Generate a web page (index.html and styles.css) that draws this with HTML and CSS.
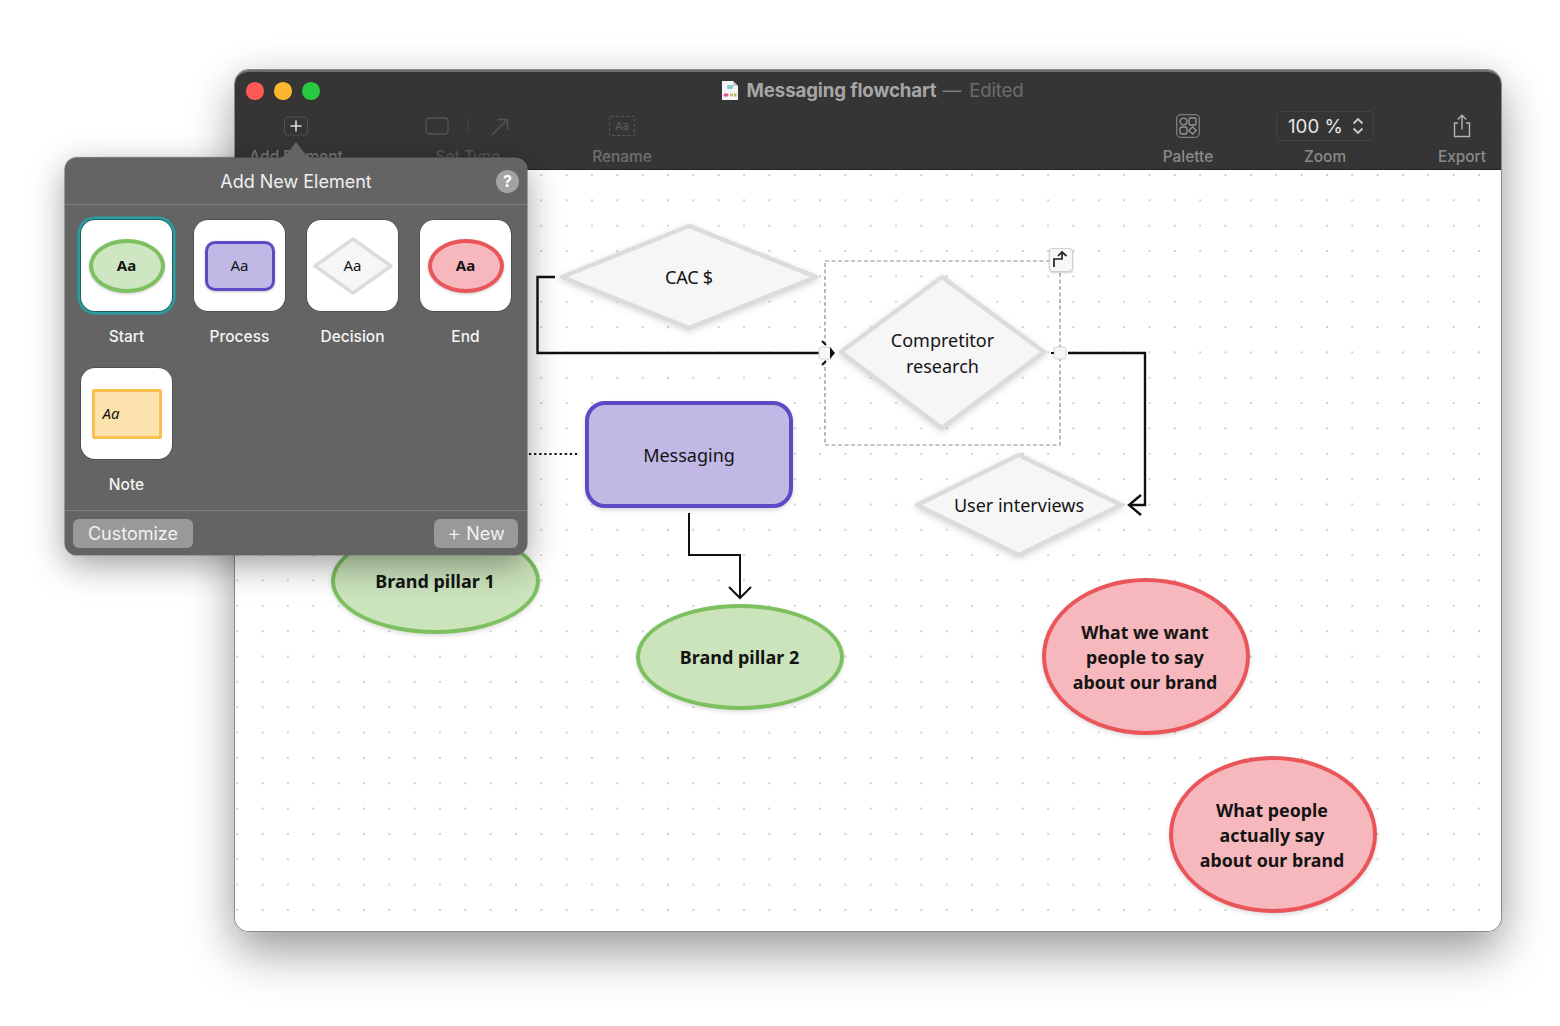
FILE: index.html
```html
<!DOCTYPE html>
<html lang="en">
<head>
<meta charset="utf-8">
<title>Messaging flowchart</title>
<link rel="stylesheet" href="styles.css">
</head>
<body>
<div class="stage">
  <main class="window">
    <header class="chrome">
      <div class="titlebar">
        <div class="lights"><span class="light light-red"></span><span class="light light-amber"></span><span class="light light-green"></span></div>
        <div class="title">
          <svg class="doc" viewBox="0 0 18 21"><path d="M1 1h11l5 5v14H1z" fill="#f4f4f4"/><path d="M12 1l5 5h-5z" fill="#c9c9c9"/><rect x="6" y="5" width="6" height="4" rx="1" fill="#7fd0d0"/><ellipse cx="5" cy="15" rx="2.6" ry="1.8" fill="#e0559a"/><rect x="9" y="13.5" width="3" height="3" fill="#e9b949"/><rect x="13" y="13.5" width="2.5" height="3" fill="#8fc77a"/></svg>
          <span class="doc-name">Messaging flowchart</span><span class="dash">—</span><span class="edited">Edited</span>
        </div>
      </div>
      <div class="toolbar">
        <div class="tool tool-add">
          <svg class="tool-icon" width="24" height="20" viewBox="0 0 24 20"><rect x=".5" y="1" width="23" height="18" rx="3" fill="none" stroke="#515151"/><path d="M12 4.500v11M6.500 10h11" stroke="#dcdcdc" stroke-width="1.6"/></svg>
          <span class="tool-label">Add Element</span>
        </div>
        <div class="tool tool-type">
          <svg class="tool-icon" width="86" height="20" viewBox="0 0 86 20"><rect x="1" y="2" width="22" height="16" rx="3" fill="none" stroke="#555" stroke-width="1.3"/><path d="M43 2v16" stroke="#484848"/><path d="M67 19L82 4M72 3.500h10.500V14" fill="none" stroke="#555" stroke-width="1.4"/></svg>
          <span class="tool-label off">Set Type</span>
        </div>
        <div class="tool tool-rename">
          <span class="rename-box">Aa</span>
          <span class="tool-label dim">Rename</span>
        </div>
        <div class="tools-right">
          <div class="tool tool-narrow">
            <svg class="tool-icon" width="24" height="24" viewBox="0 0 24 24" fill="none" stroke="#969696" stroke-width="1.3"><rect x=".7" y=".7" width="22.6" height="22.6" rx="4" stroke="#7c7c7c"/><circle cx="7.500" cy="7.500" r="3.400"/><rect x="13" y="4" width="7" height="7" rx="1"/><rect x="4" y="13" width="7" height="7" rx="2"/><path d="M16.500 12.800l3.700 3.700-3.700 3.700-3.700-3.700z"/></svg>
            <span class="tool-label">Palette</span>
          </div>
          <div class="tool tool-zoom">
            <div class="zoom-box"><span class="zoom-value">100 %</span><svg width="12" height="18" viewBox="0 0 12 18" fill="none" stroke="#c9c9c9" stroke-width="1.9"><path d="M1.500 6.500L6 2l4.500 4.500M1.500 11.500L6 16l4.500-4.500"/></svg></div>
            <span class="tool-label">Zoom</span>
          </div>
          <div class="tool tool-narrow">
            <svg class="tool-icon" width="20" height="24" viewBox="0 0 20 24" fill="none" stroke="#b4b4b4" stroke-width="1.4"><path d="M6 9H2.500v13.500h15V9H14M10 15.500V1.500M5.800 5.500L10 1.300l4.200 4.200"/></svg>
            <span class="tool-label">Export</span>
          </div>
        </div>
      </div>
    </header>

    <section class="canvas">
      <svg class="edges" viewBox="235 170 1266 761" width="1266" height="761">
        <g class="diamond">
          <polygon points="689,226 816,277 689,328 562,277"/>
          <polygon points="942,277 1044,352 942,428 841,352"/>
          <polygon points="1019,455 1121,505 1019,555 917,505"/>
        </g>
        <g class="line">
          <path d="M555 277H537.500V353H820"/>
          <path d="M1068 353H1145V505H1130"/>
          <path d="M1141 495L1129 505L1141 515"/>
          <path class="thin" d="M689 513V555H740V597"/>
          <path class="thin" d="M729 587L740 598L751 587"/>
        </g>
        <path class="dots" d="M529 454H578"/>
        <rect class="selection" x="825" y="261" width="235" height="184"/>
        <rect class="handle" x="819" y="347" width="12" height="12" rx="2"/>
        <rect class="handle" x="1054" y="347" width="12" height="12" rx="2"/>
        <path class="arrow-bits" d="M830 347L835 353L830 359z"/>
        <path class="ticks" d="M822 341L826 345M822 365L826 361M1051 353h3"/>
      </svg>

      <div class="node label n-cac">CAC $</div>
      <div class="node label n-comp">Compretitor<br>research</div>
      <div class="node label n-user">User interviews</div>
      <div class="node process n-msg">Messaging</div>
      <div class="node ellipse ellipse-green n-b1">Brand pillar 1</div>
      <div class="node ellipse ellipse-green n-b2">Brand pillar 2</div>
      <div class="node ellipse ellipse-pink n-want">What we want<br>people to say<br>about our brand</div>
      <div class="node ellipse ellipse-pink n-say">What people<br>actually say<br>about our brand</div>

      <button class="route-btn"><svg width="22" height="22" viewBox="0 0 22 22" fill="none" stroke="#222" stroke-width="1.700"><path d="M4 18v-8h8V3M8 7l4-4 4.500 4"/></svg></button>
    </section>
  </main>

  <aside class="popover">
    <svg class="pop-arrow" width="40" height="20" viewBox="0 0 40 20"><path d="M0 20C8 19 12 14 20 3C28 14 32 19 40 20z" fill="#646464"/></svg>
    <div class="pop-head">
      <span class="pop-title">Add New Element</span>
      <span class="help">?</span>
    </div>
    <div class="pop-grid">
      <div class="cell">
        <div class="tile selected"><span class="shape s-ellipse s-green">Aa</span></div>
        <span class="cell-label">Start</span>
      </div>
      <div class="cell">
        <div class="tile"><span class="shape s-process">Aa</span></div>
        <span class="cell-label">Process</span>
      </div>
      <div class="cell">
        <div class="tile">
          <svg class="s-diamond" width="84" height="62" viewBox="0 0 84 62"><polygon points="42,4 80,31 42,58 4,31"/></svg>
          <span class="s-diamond-text">Aa</span>
        </div>
        <span class="cell-label">Decision</span>
      </div>
      <div class="cell">
        <div class="tile"><span class="shape s-ellipse s-pink">Aa</span></div>
        <span class="cell-label">End</span>
      </div>
      <div class="cell">
        <div class="tile"><span class="shape s-note">Aa</span></div>
        <span class="cell-label">Note</span>
      </div>
    </div>
    <div class="pop-foot">
      <button class="pop-btn btn-custom">Customize</button>
      <button class="pop-btn btn-new"><span class="btn-plus">+</span> New</button>
    </div>
  </aside>
</div>
</body>
</html>
```

FILE: styles.css
```css
* { box-sizing: border-box; }
html, body { margin: 0; padding: 0; background: #fff; }
body { width: 1560px; height: 1026px; overflow: hidden; font-family: "Inter", "Liberation Sans", sans-serif; }

.stage { position: relative; width: 1560px; height: 1026px; padding: 70px 59px 95px 235px; }

.window {
  display: flex; flex-direction: column;
  width: 1266px; height: 861px;
  border-radius: 14px;
  background: #fff;
  box-shadow: 0 0 0 1px #8a8a8a, 0 24px 48px rgba(0,0,0,.32), 0 4px 40px rgba(0,0,0,.12);
}

.chrome {
  height: 100px; flex: none;
  background: #353535;
  border-radius: 14px 14px 0 0;
  border-top: 2px solid #6c6c6c;
  border-bottom: 1px solid #232323;
}
.titlebar { position: relative; height: 37px; display: flex; align-items: center; justify-content: center; padding-left: 8px; }
.lights { position: absolute; left: 11px; top: 10px; display: flex; gap: 10.500px; }
.light { width: 17.500px; height: 17.500px; border-radius: 50%; }
.light-red { background: #fd5a55; }
.light-amber { background: #fdb62f; }
.light-green { background: #28c840; }
.title { display: flex; align-items: center; font-size: 18.700px; line-height: 24px; }
.doc { width: 18px; height: 21px; margin-right: 8px; }
.doc-name { font-weight: 700; color: #a6a6a6; letter-spacing: -.15px; }
.dash { color: #7c7c7c; margin: 0 8px 0 6px; }
.edited { color: #6c6c6c; letter-spacing: -.2px; }

.toolbar { display: flex; height: 61px; padding: 5px 9px 0 15px; }
.tool { display: flex; flex-direction: column; align-items: center; height: 54px; }
.tool-icon { display: block; height: 24px; }
.tool-add { width: 92px; }
.tool-type { width: 100px; margin-left: 76px; }
.tool-rename { width: 70px; margin-left: 69px; }
.tools-right { margin-left: auto; display: flex; gap: 57px; }
.tool-narrow { width: 60px; }
.tool-zoom { width: 100px; }
.tool-label { margin-top: 10px; font-size: 15.400px; line-height: 18px; font-weight: 500; color: #8b8b8b; white-space: nowrap; }
.tool-label.dim { color: #6f6f6f; }
.tool-label.off { color: #555; }
.tool-add .tool-label { color: #777; }
.rename-box {
  width: 26px; height: 20px; margin: 2px 0 2px;
  border: 1px dashed #575757; border-radius: 2px;
  font-size: 11px; line-height: 18px; text-align: center; color: #5c5c5c;
}
.zoom-box {
  display: flex; align-items: center; justify-content: space-between;
  width: 98px; height: 30px; margin-top: -3px; padding: 0 9px 0 11px;
  border: 1px solid #434343; border-radius: 4px;
}
.zoom-value { font-size: 18.700px; color: #e6e6e6; }
.tool-zoom .tool-label { margin-top: 7px; }

.canvas {
  position: relative; flex: 1;
  border-radius: 0 0 14px 14px;
  background-color: #fff;
  background-image: radial-gradient(circle, #cfcfcf 1px, transparent 1.400px);
  background-size: 25.350px 25.350px;
  background-position: -10.500px -7.700px;
}
.edges { position: absolute; left: 0; top: 0; display: block; }
.diamond polygon { fill: #f6f6f7; stroke: #dcdcdc; stroke-width: 4.500; stroke-linejoin: round; filter: drop-shadow(0 2px 3px rgba(0,0,0,.14)); }
.line path { fill: none; stroke: #111; stroke-width: 2.400; }
.line path.thin { stroke-width: 2; }
.dots { stroke: #111; stroke-width: 2.200; stroke-dasharray: 2.200 2.900; fill: none; }
.selection { fill: none; stroke: #8c8c8c; stroke-width: 1.200; stroke-dasharray: 4 2.500; }
.handle { fill: #f6f6f6; stroke: #d2d2d2; stroke-width: 1; }
.arrow-bits { fill: #111; }
.ticks { stroke: #111; stroke-width: 2; fill: none; }

.node {
  position: absolute; display: flex; align-items: center; justify-content: center; text-align: center;
  font-family: "Noto Sans", "Open Sans", sans-serif; color: #141414;
  font-size: 18px; line-height: 25.300px; padding-top: 2px;
}
.label { background: transparent; }
.n-cac { left: 325px; top: 54px; width: 258px; height: 106px; letter-spacing: -.2px; }
.n-comp { left: 604px; top: 105px; width: 207px; height: 155px; }
.n-user { left: 680px; top: 283px; width: 208px; height: 104px; }
.process {
  left: 350px; top: 231px; width: 208px; height: 107px;
  background: #c1b8e5; border: 4px solid #5b4cc5; border-radius: 20px;
  box-shadow: 0 2px 4px rgba(0,0,0,.16);
}
.ellipse { border-radius: 50%; font-weight: 700; border-style: solid; border-width: 4px; box-shadow: 0 2px 4px rgba(0,0,0,.14); }
.ellipse-green { background: #cbe4bc; border-color: #7cc05f; padding-right: 1px; }
.ellipse-pink { background: #f6b8bc; border-color: #e95559; padding-right: 2px; font-size: 17.800px; }
.n-b1 { left: 96px; top: 358px; width: 209px; height: 106px; }
.n-b2 { left: 401px; top: 434px; width: 208px; height: 106px; }
.n-want { left: 807px; top: 408px; width: 208px; height: 157px; }
.n-say { left: 934px; top: 586px; width: 208px; height: 157px; }
.route-btn {
  position: absolute; left: 814px; top: 78px; width: 24px; height: 24px; padding: 0;
  display: flex; align-items: center; justify-content: center;
  background: #f7f7f7; border: 1px solid #cfcfcf; border-radius: 4px;
  box-shadow: 0 1px 2px rgba(0,0,0,.2);
}

.popover {
  position: absolute; left: 65px; top: 158px; width: 462px; height: 397px;
  display: flex; flex-direction: column;
  background: #646464; border-radius: 12px;
  box-shadow: 0 0 0 .6px #7a7a7a, 0 -1px 1px rgba(0,0,0,.5), 0 10px 34px rgba(0,0,0,.38);
}
.pop-arrow { position: absolute; left: 211px; top: -19px; display: block; }
.pop-head {
  position: relative; height: 47px; flex: none;
  display: flex; align-items: center; justify-content: center;
  border-bottom: 1px solid #808080;
}
.pop-title { font-size: 18px; color: #f0f0f0; }
.help {
  position: absolute; right: 8px; top: 12px; width: 23px; height: 23px; border-radius: 50%;
  background: #a3a3a3; color: #fff; font-weight: 700; font-size: 16px; line-height: 23px; text-align: center;
}
.pop-grid {
  flex: 1; min-height: 0; padding: 15px 0 0 16px;
  display: grid; grid-template-columns: repeat(4, 91px); grid-template-rows: 148px 130px; column-gap: 22px;
  align-content: start;
}
.cell { display: flex; flex-direction: column; align-items: center; }
.cell-label { margin-top: 16px; font-size: 15.500px; line-height: 19px; font-weight: 500; color: #f4f4f4; }
.tile {
  position: relative; width: 91px; height: 91px; flex: none;
  background: #fff; border-radius: 14px;
  display: flex; align-items: center; justify-content: center;
  box-shadow: 0 0 0 .5px rgba(0,0,0,.4);
}
.tile.selected { box-shadow: 0 0 0 1px #1f5f60, 0 0 0 3.500px #2a9c9f; }
.shape { display: flex; align-items: center; justify-content: center; font-family: "Noto Sans", sans-serif; font-size: 15px; color: #141414; box-shadow: 0 1px 3px rgba(0,0,0,.22); padding-bottom: 2px; }
.s-ellipse { width: 76px; height: 54px; border-radius: 50%; border: 4px solid; font-weight: 700; }
.s-green { background: #cfe6c2; border-color: #7cc05f; }
.s-pink { background: #f6b8bc; border-color: #e95559; }
.s-process { width: 70px; height: 50px; border-radius: 10px; border: 3.500px solid #5b4cc5; background: #c1b8e5; }
.s-note { width: 70px; height: 50px; margin-top: 1px; border: 3.500px solid #f9c04e; background: #fce3ae; border-radius: 2px; justify-content: flex-start; padding: 0 0 2px 8px; font-style: italic; box-shadow: none; }
.s-diamond { display: block; }
.s-diamond polygon { fill: #f6f6f7; stroke: #dcdcdc; stroke-width: 3.500; stroke-linejoin: round; }
.s-diamond-text { position: absolute; padding-bottom: 2px; font-family: "Noto Sans", sans-serif; font-size: 15px; color: #141414; }

.pop-foot {
  height: 45px; flex: none;
  display: flex; align-items: flex-start; justify-content: space-between;
  padding: 8px 9px 0 8px;
  border-top: 1px solid #808080;
}
.pop-btn {
  height: 29px; padding: 0; border: 0; border-radius: 6px;
  background: #999; color: #f2f2f2; font: 400 18px "Inter", sans-serif; line-height: 29px;
}
.btn-custom { width: 120px; }
.btn-new { width: 84px; }
.btn-plus { font-weight: 300; font-size: 21px; line-height: 20px; }
```
